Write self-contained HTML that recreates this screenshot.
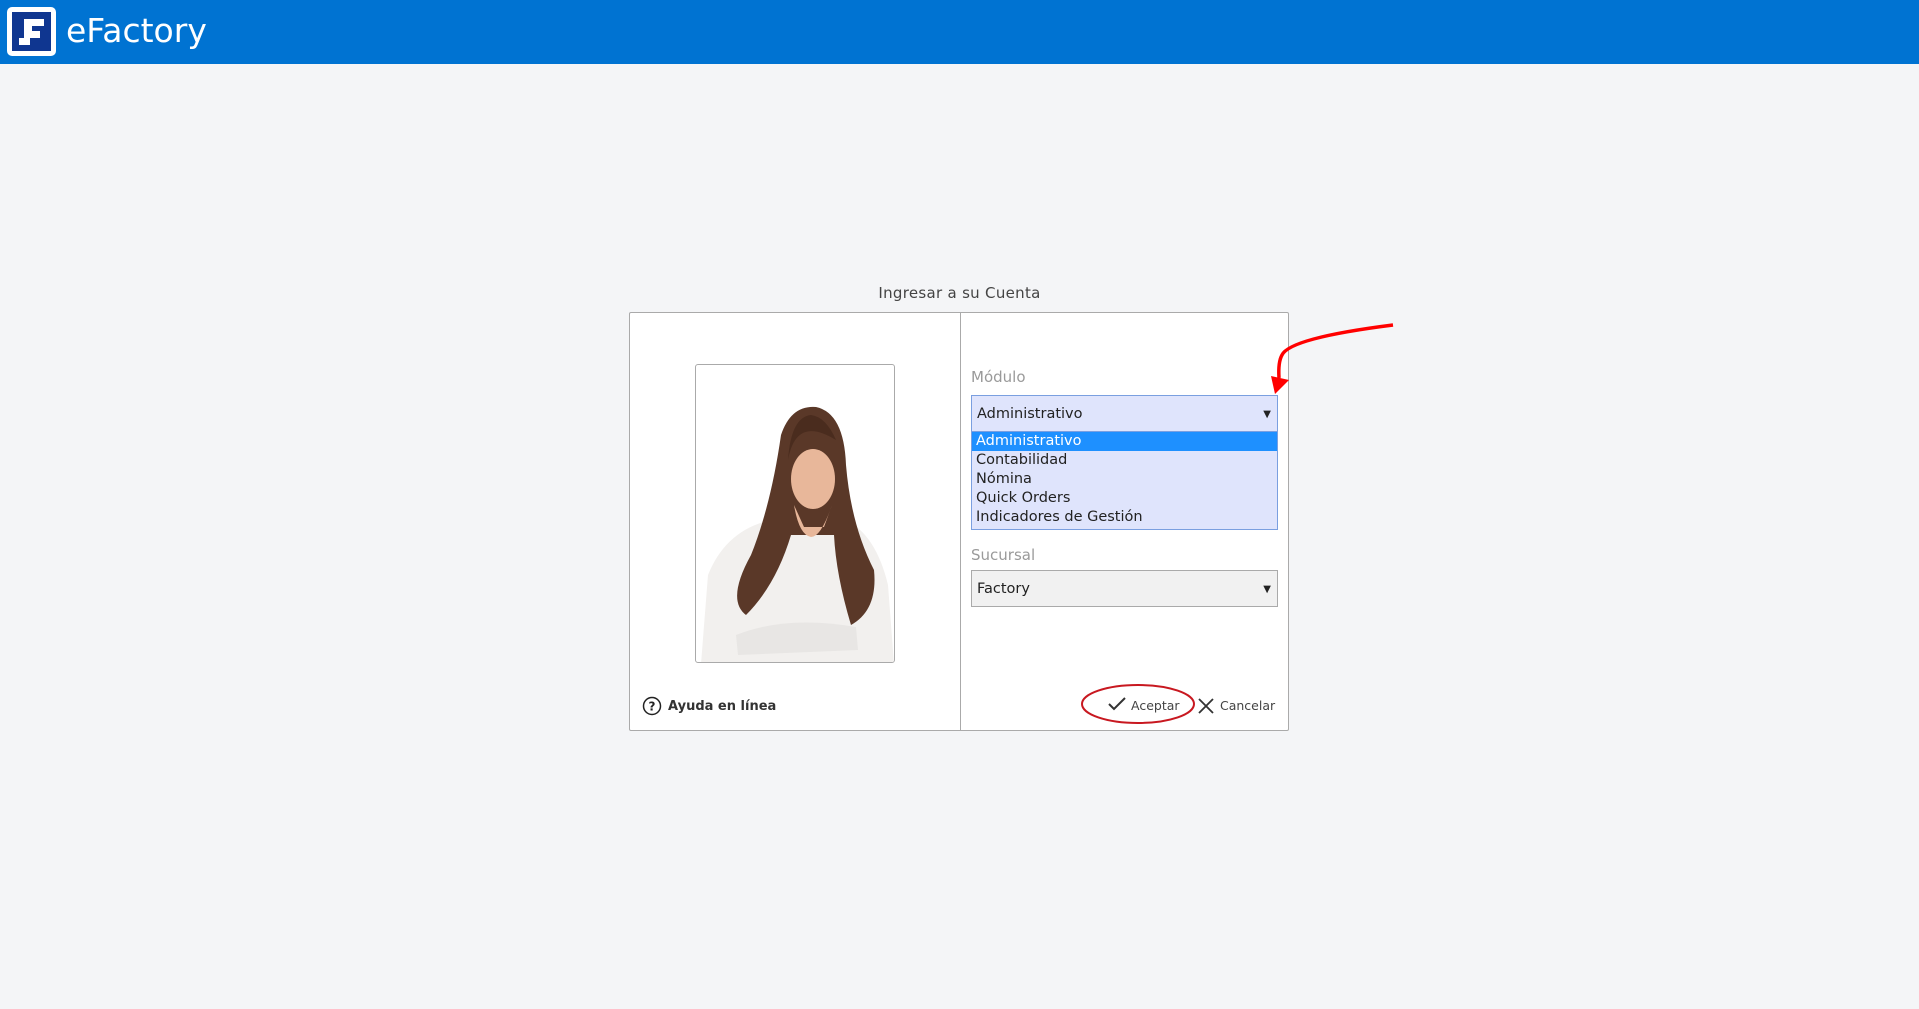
<!DOCTYPE html>
<html><head><meta charset="utf-8"><style>
*{margin:0;padding:0;box-sizing:border-box}
body{width:1919px;height:1009px;background:#f4f5f7;font-family:"DejaVu Sans","Liberation Sans",sans-serif;position:relative;overflow:hidden}
.hdr{position:absolute;left:0;top:0;width:1919px;height:64px;background:#0073d2}
.logo{position:absolute;left:7px;top:7px;width:49px;height:49px;border:2px solid #fff;border-radius:5px;background:#fff;padding:3px}
.logo .in{width:100%;height:100%;background:#0f3690;position:relative}
.brand{position:absolute;left:66px;top:9px;color:#fff;font-size:33px;line-height:44px}
.title{position:absolute;left:0;width:1919px;top:284px;text-align:center;font-size:15px;color:#444;letter-spacing:.3px}
.dlg{position:absolute;left:629px;top:312px;width:660px;height:419px;background:#fff;border:1px solid #aaa;border-radius:2px}
.div{position:absolute;left:330px;top:0;width:1px;height:100%;background:#aaa}
.photo{position:absolute;left:65px;top:51px;width:200px;height:299px;border:1px solid #aaa;border-radius:3px;overflow:hidden;background:#fff}
.lbl{position:absolute;left:341px;font-size:15px;color:#9a9a9a}
.sel{position:absolute;left:341px;width:307px;height:37px;font-size:14.5px;padding-left:5px;line-height:37px;color:#222}
.sel .ar{position:absolute;right:6px;top:0;font-size:10px}
.list{position:absolute;left:341px;top:119px;width:307px;height:98px;background:#dfe4fc;border:1px solid #7a9fe0;border-top:none;font-size:14.5px;color:#222}
.list div{height:19px;line-height:19px;padding-left:4px}
.list .hl{background:#1e90ff;color:#fff}
.help{position:absolute;left:12px;top:383px;font-size:13px;font-weight:bold;color:#333;display:flex;align-items:center}
.btn{position:absolute;font-size:12.5px;color:#444}
</style></head><body>
<div class="hdr">
 <div class="logo"><div class="in">
  <svg width="39" height="39" viewBox="0 0 39 39" style="position:absolute;left:0;top:0"><path d="M12 7h20v7H20v5h8v7H18v7H7v-7h5z" fill="#fff"/></svg>
 </div></div>
 <div class="brand">eFactory</div>
</div>
<div class="title">Ingresar a su Cuenta</div>
<div class="dlg">
 <div class="div"></div>
 <div class="photo">
  <svg width="200" height="299" viewBox="0 0 200 299">
   <path d="M5 299 L12 210 Q30 165 75 155 L150 155 Q180 170 192 220 L198 299Z" fill="#f2f0ee"/>
   <path d="M85 70 Q95 40 120 42 Q148 48 150 100 Q155 160 178 205 Q182 245 155 260 Q140 210 138 170 L95 170 Q80 220 50 250 Q30 235 55 190 Q75 140 85 70Z" fill="#5a3828"/>
   <ellipse cx="117" cy="114" rx="22" ry="30" fill="#e8b79a"/>
   <path d="M98 140 L108 162 L128 162 L136 140 Q125 172 115 172 Q103 170 98 140Z" fill="#e8b79a"/>
   <path d="M92 95 Q100 50 140 75 Q130 52 115 50 Q95 52 92 95Z" fill="#4a2c1e"/>
   <path d="M40 270 Q90 250 160 262 L162 285 L42 290Z" fill="#e8e6e4"/>
  </svg>
 </div>
 <div class="lbl" style="top:55px">Módulo</div>
 <div class="sel" style="top:82px;background:#dfe4fc;border:1px solid #7a9fe0">Administrativo<span class="ar">▼</span></div>
 <div class="list">
  <div class="hl">Administrativo</div><div>Contabilidad</div><div>Nómina</div><div>Quick Orders</div><div>Indicadores de Gestión</div>
 </div>
 <div class="lbl" style="top:233px">Sucursal</div>
 <div class="sel" style="top:257px;background:#f1f1f1;border:1px solid #aaa">Factory<span class="ar">▼</span></div>
 <div class="help"><svg width="20" height="20" viewBox="0 0 20 20" style="margin-right:6px"><circle cx="10" cy="10" r="8.5" fill="none" stroke="#222" stroke-width="1.5"/><text x="10" y="14.5" font-size="12" text-anchor="middle" font-family="DejaVu Sans" fill="#222">?</text></svg>Ayuda en línea</div>
 <svg width="20" height="16" style="position:absolute;left:477px;top:383px"><path d="M2 8l5 5L18 2" fill="none" stroke="#333" stroke-width="2"/></svg>
 <div class="btn" style="left:501px;top:385px">Aceptar</div>
 <svg width="18" height="18" style="position:absolute;left:567px;top:384px"><path d="M2 2l14 14M16 2L2 16" stroke="#333" stroke-width="1.8"/></svg>
 <div class="btn" style="left:590px;top:385px">Cancelar</div>
</div>
<svg width="1919" height="1009" style="position:absolute;left:0;top:0;pointer-events:none">
 <ellipse cx="1138" cy="704" rx="56" ry="19" fill="none" stroke="#c81820" stroke-width="2"/>
 <path d="M1393 325 Q1290 338 1282 355 Q1278 362 1279 378" fill="none" stroke="#f00" stroke-width="3.5"/>
 <path d="M1271 376 L1289 380 L1275 394Z" fill="#f00"/>
</svg>
</body></html>
